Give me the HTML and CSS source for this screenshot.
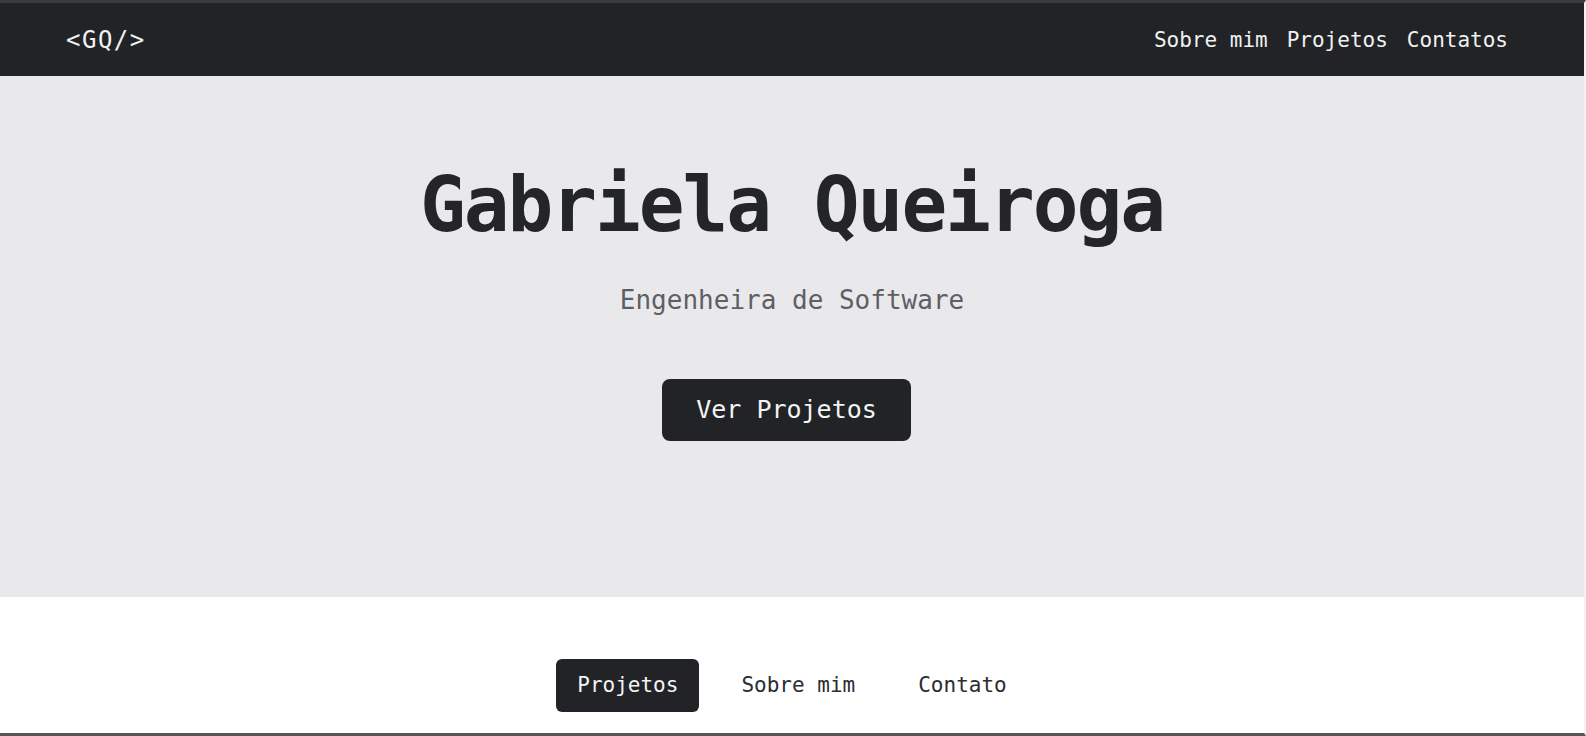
FILE: index.html
```html
<!DOCTYPE html>
<html lang="pt-BR">
<head>
<meta charset="utf-8">
<title>Gabriela Queiroga</title>
<link rel="stylesheet" href="styles.css">
</head>
<body>
<div class="page">
  <header class="navbar">
    <a class="logo" href="#">&lt;GQ/&gt;</a>
    <nav class="nav-links">
      <a href="#sobre">Sobre mim</a>
      <a href="#projetos">Projetos</a>
      <a href="#contatos">Contatos</a>
    </nav>
  </header>
  <section class="hero">
    <h1 class="hero-title">Gabriela Queiroga</h1>
    <p class="hero-subtitle">Engenheira de Software</p>
    <a class="hero-btn" href="#projetos">Ver Projetos</a>
  </section>
  <section class="tabs-section">
    <div class="tabs">
      <button class="tab active">Projetos</button>
      <button class="tab">Sobre mim</button>
      <button class="tab">Contato</button>
    </div>
  </section>
</div>
</body>
</html>
```
FILE: styles.css
```css
html, body {
  margin: 0;
  padding: 0;
  background: #f2f2f2;
}
body {
  font-family: "DejaVu Sans Mono", "Liberation Mono", monospace;
}
.page {
  height: 736px;
  box-sizing: border-box;
  border-top: 3px solid #3b3c3e;
  border-bottom: 3px solid #565656;
  border-right: 2px solid #f3f3f3;
  display: flex;
  flex-direction: column;
  overflow: hidden;
  background: #ffffff;
}
a { text-decoration: none; }
.navbar {
  height: 73px;
  flex: none;
  background: #212327;
  display: flex;
  align-items: center;
  justify-content: space-between;
  padding: 0 76px 0 66px;
}
.logo {
  color: #f1f1f1;
  font-size: 24px;
  letter-spacing: 1.5px;
}
.nav-links {
  display: flex;
  gap: 19px;
}
.nav-links a {
  color: #f1f1f1;
  font-size: 21px;
}
.hero {
  flex: none;
  height: 521px;
  box-sizing: border-box;
  background: #e9e9ec;
  padding-top: 83px;
  display: flex;
  flex-direction: column;
  align-items: center;
}
.hero-title {
  margin: 0;
  font-size: 76px;
  line-height: 1.2;
  font-weight: 700;
  letter-spacing: -2px;
  color: #232529;
}
.hero-subtitle {
  margin: 35px 0 0;
  font-size: 26px;
  line-height: 1.2;
  font-weight: 300;
  color: #5e5f64;
}
.hero-btn {
  margin: 63px 11px 0 0;
  background: #212327;
  color: #f4f4f4;
  font-size: 25px;
  line-height: 1.2;
  padding: 16px 34px;
  border-radius: 8px;
}
.tabs-section {
  flex: 1;
  padding-top: 62px;
  display: flex;
  justify-content: center;
}
.tabs {
  display: flex;
  gap: 21px;
  align-items: flex-start;
}
.tab {
  font-family: inherit;
  font-size: 21px;
  line-height: 1.2;
  padding: 14px 21px;
  border: none;
  border-radius: 6px;
  background: transparent;
  color: #2b2c30;
  cursor: pointer;
}
.tab.active {
  background: #212327;
  color: #f4f4f4;
}
```
